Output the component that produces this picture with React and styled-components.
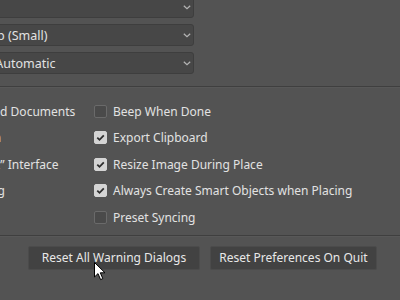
import React from 'react'
import styled, { createGlobalStyle } from 'styled-components'

const GlobalStyle = createGlobalStyle`
  html, body { margin: 0; padding: 0; background: #535353; }
  body { font-family: "Noto Sans", "Open Sans", sans-serif; }
`

const selects = [
  { label: 'Color Picker:', value: 'Adobe' },
  { label: 'HUD Color Picker:', value: 'Hue Strip (Small)' },
  { label: 'Image Interpolation:', value: 'Bicubic Automatic' },
]

const leftOptions = [
  { label: 'Auto-Update Modified Linked Documents', checked: false },
  { label: 'Always Show “Home” Screen', checked: true },
  { label: 'Use Legacy “New Document” Interface', checked: false },
  { label: 'Skip Transform when Placing', checked: false },
]

const rightOptions = [
  { label: 'Beep When Done', checked: false },
  { label: 'Export Clipboard', checked: true },
  { label: 'Resize Image During Place', checked: true },
  { label: 'Always Create Smart Objects when Placing', checked: true },
  { label: 'Preset Syncing', checked: false },
]

export default function App() {
  return (
    <Page>
      <GlobalStyle />
      <SelectColumn>
        {selects.map((s) => (
          <Select key={s.label}>
            <span>{s.value}</span>
            <Chevron viewBox="0 0 8 5">
              <path d="M0.8 0.8 L4 3.8 L7.2 0.8" />
            </Chevron>
          </Select>
        ))}
      </SelectColumn>
      <Divider $top={12} />
      <OptionsGrid>
        <OptionColumn>
          {leftOptions.map((o) => (
            <Option key={o.label} {...o} />
          ))}
        </OptionColumn>
        <OptionColumn>
          {rightOptions.map((o) => (
            <Option key={o.label} {...o} />
          ))}
        </OptionColumn>
      </OptionsGrid>
      <Divider $top={4} />
      <ButtonRow>
        <Button $w={172}>Reset All Warning Dialogs</Button>
        <Button $w={167}>Reset Preferences On Quit</Button>
      </ButtonRow>
      <Cursor viewBox="0 0 12 19">
        <path
          d="M0.5 0.5 L0.5 15 L4 11.6 L6.6 17.6 L8.8 16.6 L6.3 10.8 L11 10.8 Z"
          fill="#fff"
          stroke="#000"
          strokeWidth="1"
          strokeLinejoin="round"
        />
      </Cursor>
    </Page>
  )
}

const Option = ({ label, checked }) => (
  <OptionRow>
    <Box $checked={checked}>
      {checked && (
        <svg viewBox="0 0 13 13" width="13" height="13">
          <path d="M3.3 6.6 L5.5 8.8 L9.8 4.3" fill="none" stroke="#2e2e2e" strokeWidth="1.8" />
        </svg>
      )}
    </Box>
    <Label>{label}</Label>
  </OptionRow>
)

const Page = styled.div`
  position: relative;
  width: 400px;
  height: 300px;
  overflow: hidden;
  background: #535353;
  color: #dedede;
  font-size: 12px;
`

const SelectColumn = styled.div`
  display: flex;
  flex-direction: column;
  gap: 6px;
  margin: -4px 0 0 -57px;
  width: 251px;
`

const Select = styled.div`
  height: 22px;
  box-sizing: border-box;
  display: flex;
  align-items: center;
  justify-content: space-between;
  padding: 0 2px 0 6px;
  background: #474747;
  border: 1px solid #3e3e3e;
  border-radius: 3px;
  font-size: 12.5px;
  color: #e2e2e2;
  white-space: nowrap;
`

const Chevron = styled.svg`
  width: 8px;
  height: 5px;
  fill: none;
  stroke: #b4b4b4;
  stroke-width: 1.2;
`

const Divider = styled.div`
  height: 1px;
  background: #3f3f3f;
  border-bottom: 1px solid #585858;
  margin-top: ${(p) => p.$top}px;
`

const OptionsGrid = styled.div`
  display: grid;
  grid-template-columns: 271px 1fr;
  margin: 10px 0 0 -177px;
`

const OptionColumn = styled.div`
  display: flex;
  flex-direction: column;
`

const OptionRow = styled.div`
  height: 26.5px;
  display: flex;
  align-items: center;
  gap: 6px;
  white-space: nowrap;
`

const Box = styled.div`
  width: 13px;
  height: 13px;
  box-sizing: border-box;
  flex: none;
  border-radius: 2px;
  background: ${(p) => (p.$checked ? '#d4d4d4' : '#4a4a4a')};
  border: 1px solid ${(p) => (p.$checked ? '#d4d4d4' : '#6a6a6a')};
  display: flex;
  align-items: center;
  justify-content: center;
  & svg { margin: -1px; }
`

const Label = styled.span`
  font-size: 12px;
  color: #e2e2e2;
`

const ButtonRow = styled.div`
  display: flex;
  justify-content: flex-end;
  gap: 10px;
  padding: 9px 23px 0 0;
`

const Button = styled.div`
  width: ${(p) => p.$w}px;
  height: 24px;
  box-sizing: border-box;
  display: flex;
  align-items: center;
  justify-content: center;
  background: #424242;
  border: 1px solid #4b4b4b;
  border-radius: 2px;
  font-size: 12px;
  color: #e8e8e8;
  white-space: nowrap;
`

const Cursor = styled.svg`
  position: absolute;
  left: 94px;
  top: 262px;
  width: 12px;
  height: 19px;
`
